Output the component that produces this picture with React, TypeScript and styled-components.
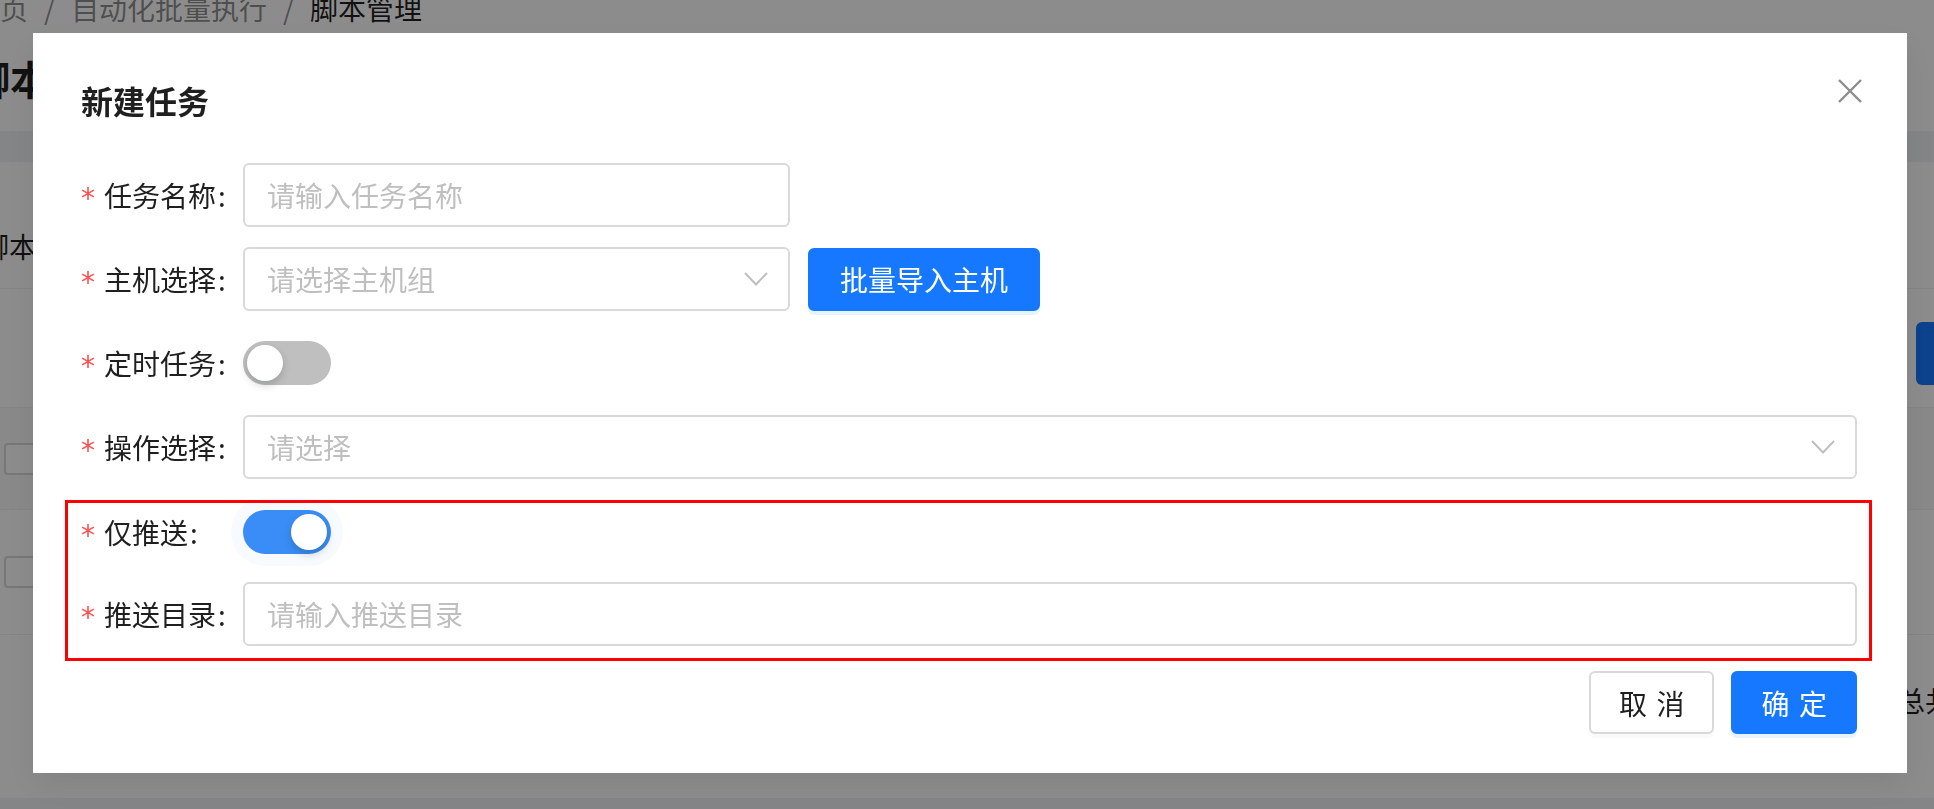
import React from "react";
import styled, { createGlobalStyle } from "styled-components";

const GlobalStyle = createGlobalStyle`
  html, body {
    margin: 0;
    padding: 0;
    overflow: hidden;
  }
  body {
    font-family: "Noto Sans CJK SC", "Noto Sans", sans-serif;
    color: #1f1f1f;
  }
  * {
    box-sizing: border-box;
  }
`;

/* ---------- page behind the mask ---------- */

const Page = styled.div`
  width: 1934px;
  height: 809px;
  overflow: hidden;
  background: #fff;
  display: flex;
  flex-direction: column;
`;

const Breadcrumb = styled.div`
  height: 31px;
  display: flex;
  align-items: flex-start;
  font-size: 28px;
  line-height: 40px;
  color: rgba(0, 0, 0, 0.45);
  margin-left: -28px;
  overflow: visible;
`;

const Crumbs = styled.div`
  margin-top: -12px;
  display: flex;
  gap: 16px;
`;

const Crumb = styled.span<{ $current?: boolean }>`
  color: ${(p) => (p.$current ? "rgba(0,0,0,0.88)" : "rgba(0,0,0,0.45)")};
`;

const PageHeader = styled.div`
  height: 100px;
  padding-top: 27px;
  margin-left: -30px;
`;

const PageTitle = styled.div`
  font-size: 40px;
  line-height: 40px;
  font-weight: 700;
  color: rgba(0, 0, 0, 0.88);
`;

const Band = styled.div<{ $h: number }>`
  height: ${(p) => p.$h}px;
  flex-shrink: 0;
  background: #f0f2f5;
`;

const Card = styled.div`
  flex: 1;
  display: flex;
  flex-direction: column;
  background: #fff;
`;

const SearchRow = styled.div`
  height: 127px;
  padding-top: 64px;
  margin-left: -19px;
  font-size: 28px;
  line-height: 40px;
  border-bottom: 1px solid #f0f0f0;
`;

const ToolRow = styled.div`
  height: 118px;
  padding-top: 33px;
  padding-left: 1916px;
`;

const BlueBlock = styled.div`
  width: 160px;
  height: 63px;
  border-radius: 6px;
  background: #1677ff;
`;

const TableRow = styled.div<{ $h: number; $head?: boolean }>`
  height: ${(p) => p.$h}px;
  display: flex;
  align-items: center;
  padding-left: 4px;
  border-top: ${(p) => (p.$head ? "1px solid #f0f0f0" : "none")};
  border-bottom: 1px solid #f0f0f0;
  background: ${(p) => (p.$head ? "#fafafa" : "#fff")};
`;

const CheckBox = styled.span`
  width: 32px;
  height: 32px;
  border: 2px solid #d9d9d9;
  border-radius: 4px;
  background: #fff;
`;

const Pager = styled.div`
  flex: 1;
  padding-top: 45px;
  padding-left: 1897px;
  font-size: 28px;
  line-height: 40px;
  white-space: nowrap;
`;

/* ---------- mask + modal ---------- */

const Mask = styled.div`
  position: fixed;
  inset: 0;
  background: rgba(0, 0, 0, 0.45);
`;

const Modal = styled.div`
  position: fixed;
  top: 33px;
  left: 33px;
  width: 1874px;
  padding: 45px 50px 39px 48px;
  background: #fff;
  box-shadow: 0 12px 32px rgba(0, 0, 0, 0.08);
`;

const ModalTitle = styled.div`
  font-size: 32px;
  line-height: 44px;
  font-weight: 700;
  color: #1f1f1f;
`;

const CloseButton = styled.button`
  position: absolute;
  top: 46px;
  right: 45px;
  width: 24px;
  height: 24px;
  padding: 0;
  border: none;
  background: none;
  display: flex;
`;

const Form = styled.div`
  margin-top: 41px;
  display: flex;
  flex-direction: column;
`;

const Row = styled.div<{ $h?: number; $gap?: number }>`
  height: ${(p) => p.$h ?? 64}px;
  margin-bottom: ${(p) => p.$gap ?? 0}px;
  display: flex;
  align-items: center;
`;

const Label = styled.div`
  width: 162px;
  flex-shrink: 0;
  display: flex;
  align-items: center;
  font-size: 28px;
  line-height: 40px;
  color: #1f1f1f;
  white-space: nowrap;
`;

const Star = styled.span`
  font-family: "DejaVu Sans", sans-serif;
  color: #ff4d4f;
  font-size: 28px;
  line-height: 1;
  width: 14px;
  margin-right: 9px;
  transform: translateY(4px);
`;

const Colon = styled.span`
  margin-left: 2px;
`;

const TextInput = styled.input<{ $w?: number }>`
  ${(p) => (p.$w ? `width: ${p.$w}px;` : "flex: 1;")}
  height: 64px;
  border: 2px solid #d9d9d9;
  border-radius: 6px;
  padding: 0 22px;
  font-family: inherit;
  font-size: 28px;
  color: #1f1f1f;
  background: #fff;
  outline: none;
  &::placeholder {
    color: #bfbfbf;
  }
`;

const Select = styled.div<{ $w?: number }>`
  ${(p) => (p.$w ? `width: ${p.$w}px;` : "flex: 1;")}
  height: 64px;
  border: 2px solid #d9d9d9;
  border-radius: 6px;
  padding: 0 20px 0 22px;
  display: flex;
  align-items: center;
  justify-content: space-between;
  font-size: 28px;
  background: #fff;
`;

const Placeholder = styled.span`
  color: #bfbfbf;
`;

const Button = styled.button<{ $primary?: boolean; $pad?: number }>`
  height: 63px;
  flex-shrink: 0;
  padding: 0 ${(p) => p.$pad ?? 28}px;
  border: 2px solid ${(p) => (p.$primary ? "#1677ff" : "#d9d9d9")};
  border-radius: 6px;
  background: ${(p) => (p.$primary ? "#1677ff" : "#fff")};
  color: ${(p) => (p.$primary ? "#fff" : "#1f1f1f")};
  font-family: inherit;
  font-size: 28px;
  line-height: 1;
  white-space: nowrap;
  box-shadow: ${(p) =>
    p.$primary ? "0 4px 0 rgba(5, 145, 255, 0.1)" : "0 4px 0 rgba(0, 0, 0, 0.02)"};
  cursor: pointer;
`;

const Spaced = styled.span`
  display: inline-block;
  white-space: nowrap;
  letter-spacing: 0.34em;
  margin-right: -0.34em;
`;

const Switch = styled.span<{ $on?: boolean }>`
  width: 88px;
  height: 44px;
  border-radius: 22px;
  padding: 4px;
  display: flex;
  justify-content: ${(p) => (p.$on ? "flex-end" : "flex-start")};
  background: ${(p) => (p.$on ? "#3a8df7" : "#bfbfbf")};
  box-shadow: ${(p) => (p.$on ? "0 0 0 12px rgba(22, 119, 255, 0.035)" : "none")};
`;

const Knob = styled.span`
  width: 36px;
  height: 36px;
  border-radius: 50%;
  background: #fff;
  box-shadow: 0 4px 8px rgba(0, 35, 11, 0.2);
`;

const Highlight = styled.div`
  margin: 1px -15px 0 -16px;
  padding: 0 12px 12px 13px;
  border: 3px solid #ff0000;
  display: flex;
  flex-direction: column;
`;

const Footer = styled.div`
  margin-top: 10px;
  display: flex;
  justify-content: flex-end;
  gap: 17px;
`;

const Chevron = () => (
  <svg width="24" height="14" viewBox="0 0 24 14" fill="none">
    <polyline points="1,1 12,12.5 23,1" stroke="#bfbfbf" strokeWidth="2" />
  </svg>
);

const CloseIcon = () => (
  <svg width="24" height="24" viewBox="0 0 24 24" fill="none">
    <path d="M1 1 L23 23 M23 1 L1 23" stroke="#8c8c8c" strokeWidth="2.4" />
  </svg>
);

const FieldLabel: React.FC<{ text: string }> = ({ text }) => (
  <Label>
    <Star>*</Star>
    {text}
    <Colon>:</Colon>
  </Label>
);

const App: React.FC = () => {
  return (
    <>
      <GlobalStyle />
      <Page>
        <Breadcrumb>
          <Crumbs>
            <Crumb>首页</Crumb>
            <Crumb>/</Crumb>
            <Crumb>自动化批量执行</Crumb>
            <Crumb>/</Crumb>
            <Crumb $current>脚本管理</Crumb>
          </Crumbs>
        </Breadcrumb>
        <PageHeader>
          <PageTitle>脚本管理</PageTitle>
        </PageHeader>
        <Band $h={31} />
        <Card>
          <SearchRow>脚本名称：</SearchRow>
          <ToolRow>
            <BlueBlock />
          </ToolRow>
          <TableRow $h={103} $head>
            <CheckBox />
          </TableRow>
          <TableRow $h={125}>
            <CheckBox />
          </TableRow>
          <Pager>总共 2 条</Pager>
        </Card>
        <Band $h={11} />
      </Page>

      <Mask />
      <Modal>
        <ModalTitle>新建任务</ModalTitle>
        <CloseButton aria-label="close">
          <CloseIcon />
        </CloseButton>
        <Form>
          <Row $gap={20}>
            <FieldLabel text="任务名称" />
            <TextInput $w={547} placeholder="请输入任务名称" readOnly />
          </Row>
          <Row $gap={20}>
            <FieldLabel text="主机选择" />
            <Select $w={547}>
              <Placeholder>请选择主机组</Placeholder>
              <Chevron />
            </Select>
            <Button $primary $pad={30} style={{ marginLeft: 18 }}>
              批量导入主机
            </Button>
          </Row>
          <Row $gap={20}>
            <FieldLabel text="定时任务" />
            <Switch>
              <Knob />
            </Switch>
          </Row>
          <Row $gap={20}>
            <FieldLabel text="操作选择" />
            <Select>
              <Placeholder>请选择</Placeholder>
              <Chevron />
            </Select>
          </Row>
          <Highlight>
            <Row $h={58} $gap={21}>
              <FieldLabel text="仅推送" />
              <Switch $on>
                <Knob />
              </Switch>
            </Row>
            <Row>
              <FieldLabel text="推送目录" />
              <TextInput placeholder="请输入推送目录" readOnly />
            </Row>
          </Highlight>
          <Footer>
            <Button $pad={28}>
              <Spaced>取消</Spaced>
            </Button>
            <Button $primary $pad={28}>
              <Spaced>确定</Spaced>
            </Button>
          </Footer>
        </Form>
      </Modal>
    </>
  );
};

export default App;
